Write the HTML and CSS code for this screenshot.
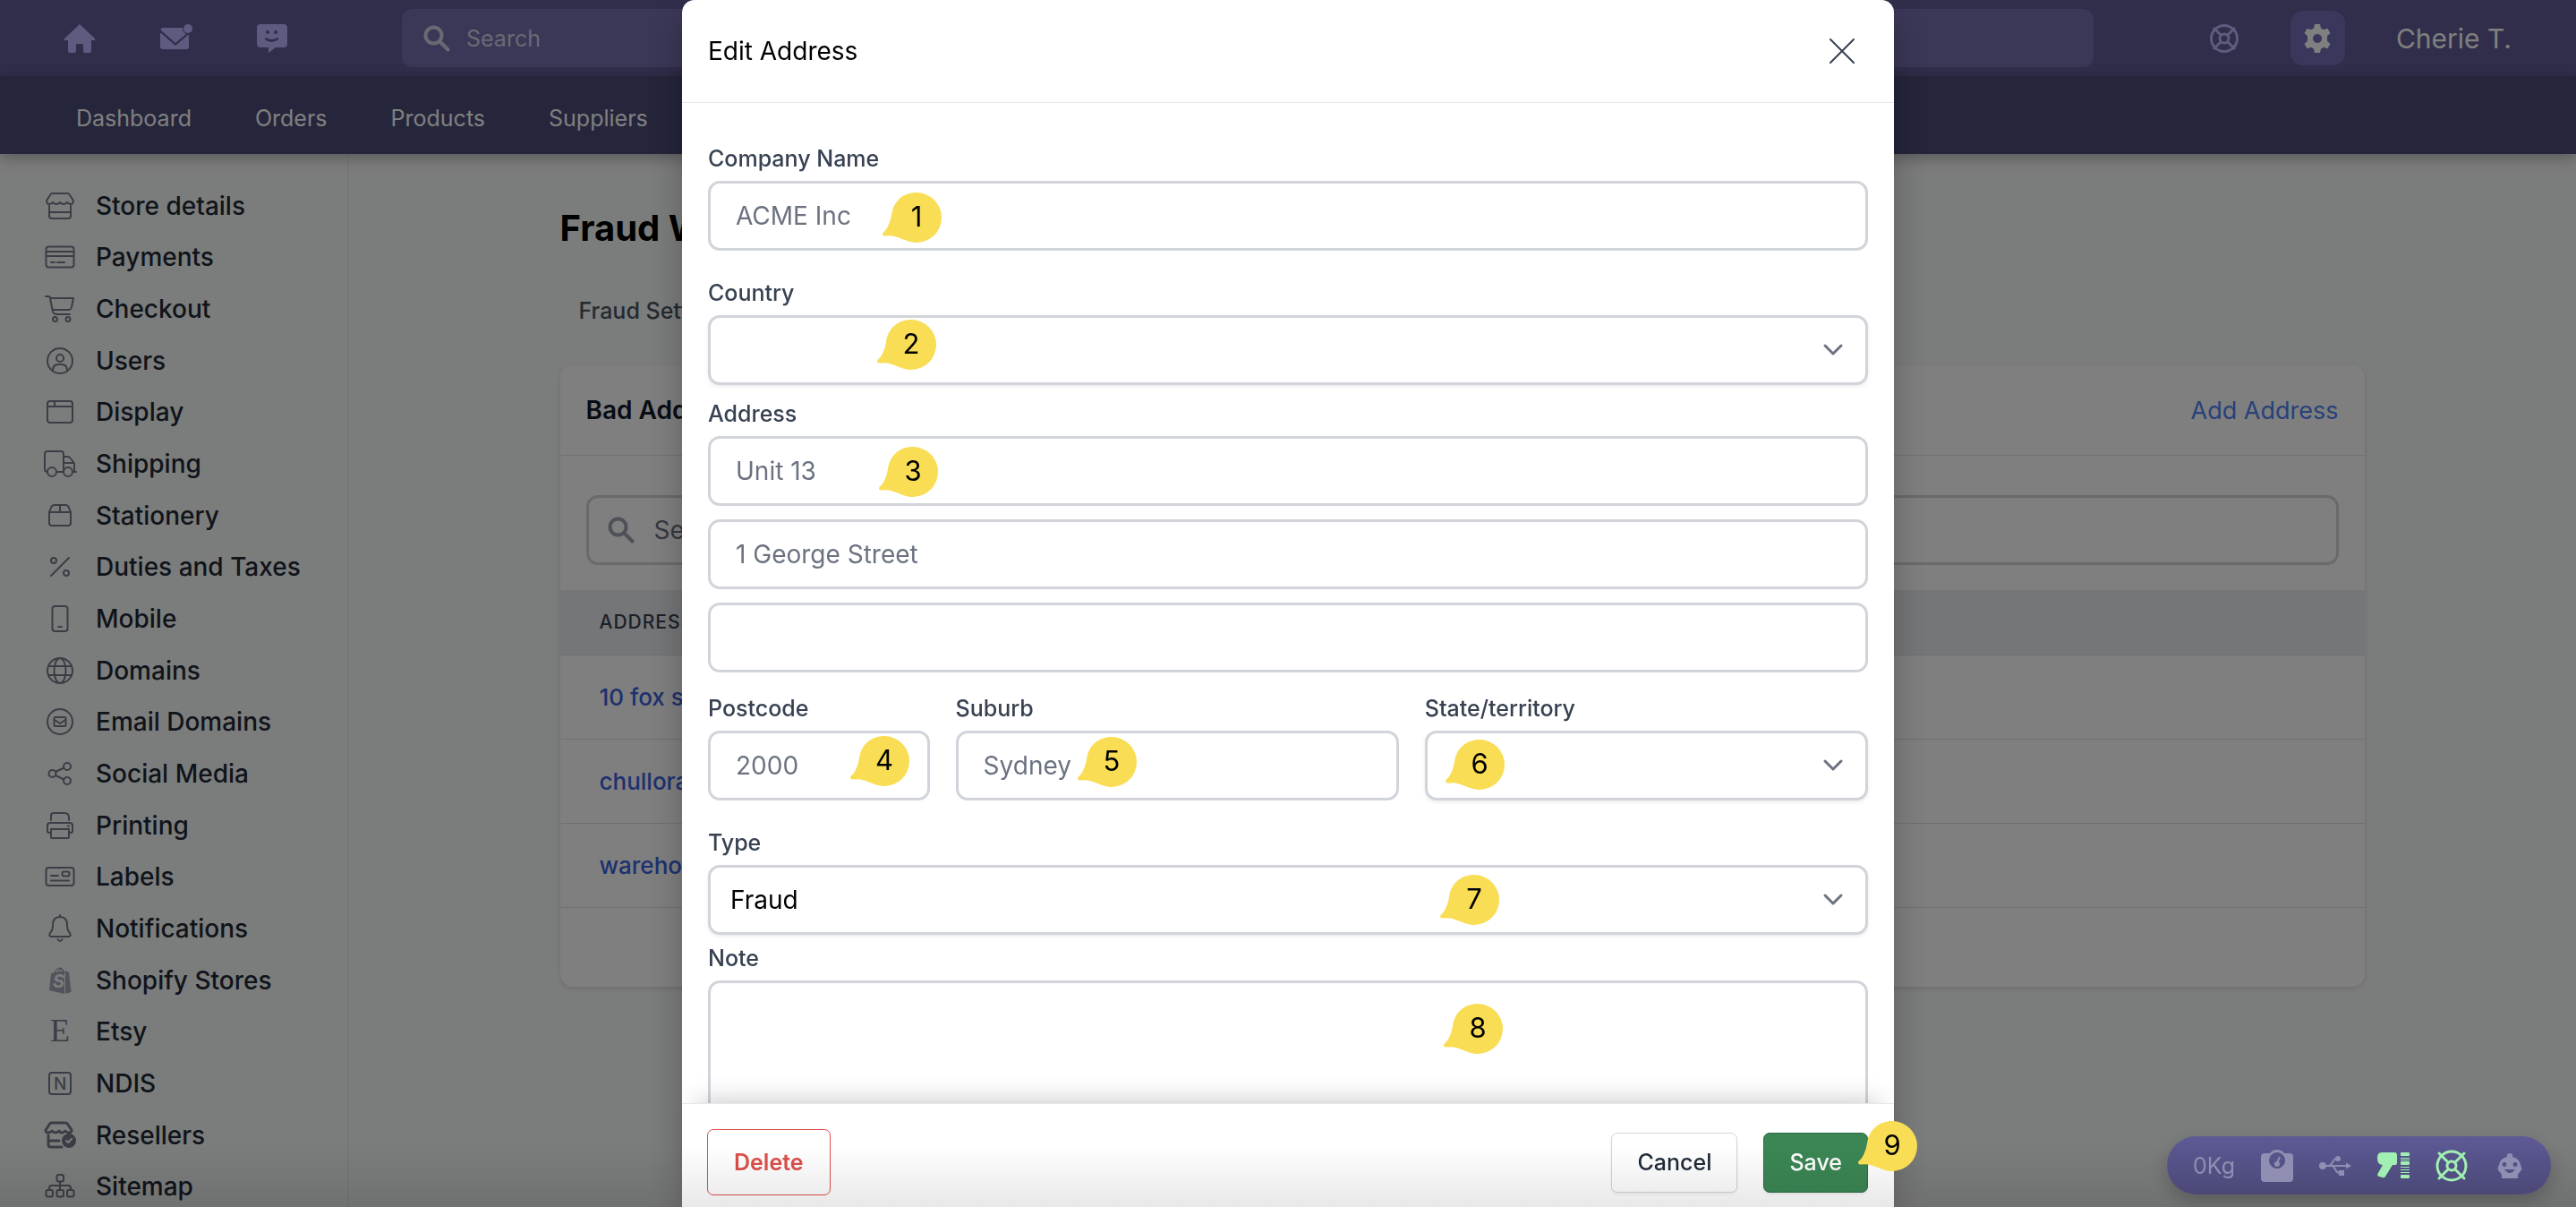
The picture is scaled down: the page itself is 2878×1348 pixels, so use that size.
FILE: index.html
```html
<!DOCTYPE html>
<html lang="en">
<head>
    <meta charset="UTF-8">
    <meta name="viewport" content="width=device-width, initial-scale=1.0">
    <title>Fraud Warnings - Edit Address</title>
    <link rel="stylesheet" href="styles.css">
</head>
<body>
    <div class="page">
        <header class="topbar">
            <a class="top-icon" href="#" aria-label="Home">
                <svg viewBox="0 0 36 36"><path d="M18 2 1 18q-1 2 1 2h3v12q0 2 2 2h5q2 0 2-2v-7q0-1 1-1h6q1 0 1 1v7q0 2 2 2h5q2 0 2-2V20h3q2 0 1-2z"/></svg>
            </a>
            <a class="top-icon" href="#" aria-label="Messages">
                <svg viewBox="0 0 36 36"><path d="M3 6h22q0 5 4 7L17 23 1 9q-1-3 2-3zM1 12l16 14 14-12h1v13q0 3-3 3H3q-3 0-3-3V12z"/><circle cx="31" cy="7" r="5"/></svg>
            </a>
            <a class="top-icon" href="#" aria-label="Chat">
                <svg viewBox="0 0 36 36"><path fill-rule="evenodd" d="M4 2h26q4 0 4 4v18q0 4-4 4h-9l-8 6v-6H4q-4 0-4-4V6q0-4 4-4zM12 9a2 2 0 1 0 .1 0zM21 9a2 2 0 1 0 .1 0zM10 17q-2 0-1 2 7 6 15 0 1-2-1-2-6 4-13 0z"/></svg>
            </a>
            <label class="top-search">
                <svg viewBox="0 0 30 30"><circle cx="11.500" cy="11.500" r="9"/><path d="m18.500 18.500 9 9"/></svg>
                <input type="search" placeholder="Search" aria-label="Search">
            </label>
            <a class="top-icon help" href="#" aria-label="Help">
                <svg viewBox="0 0 36 36"><circle cx="18" cy="18" r="14.500"/><circle cx="18" cy="18" r="5"/><path d="m6 6 8.500 8.500M30 6l-8.500 8.500M6 30l8.500-8.500M30 30l-8.500-8.500"/></svg>
            </a>
            <button class="settings" type="button" aria-label="Settings">
                <svg viewBox="0 0 32 32"><path fill-rule="evenodd" d="M13 0h6l1 4.500 3 1.700 4.300-1.500 3.200 5.200L27 13.200v5.600l3.500 3.300-3.200 5.200-4.300-1.500-3 1.700-1 4.500h-6l-1-4.500-3-1.700-4.300 1.500-3.200-5.200L5 18.800v-5.600L1.500 9.900l3.200-5.200L9 6.200l3-1.700zM16 11a5 5 0 1 0 .1 0z"/></svg>
            </button>
            <a class="user" href="#">Cherie T.</a>
        </header>
        <nav class="mainnav">
            <a href="#">Dashboard</a>
            <a href="#">Orders</a>
            <a href="#">Products</a>
            <a href="#">Suppliers</a>
        </nav>

        <div class="columns">
            <aside class="sidebar">
                <ul>
                    <li><a href="#"><svg viewBox="0 0 36 36"><path d="M9 4h18q1 0 2 2l4 6q0 4-3 4-2 0-4-2-2 2-4 2t-4-2q-2 2-4 2t-4-2q-2 2-4 2-3 0-3-4l4-6q1-2 2-2zM6 18v11q0 3 3 3h18q3 0 3-3V18M6 25h24"/></svg>Store details</a></li>
                    <li><a href="#"><svg viewBox="0 0 36 36"><rect x="2.500" y="6.500" width="31" height="23" rx="3"/><path d="M3 12h30M3 17h30M8 24h4M15 24h8"/></svg>Payments</a></li>
                    <li><a href="#"><svg viewBox="0 0 36 36"><path d="M2 4h3q2 0 2 2l3 15q1 3 4 3h15M7 6h26l-2 10q-1 3-3 3H10"/><circle cx="12.500" cy="29.500" r="2.500"/><circle cx="27" cy="29.500" r="2.500"/></svg>Checkout</a></li>
                    <li><a href="#"><svg viewBox="0 0 36 36"><circle cx="18" cy="18" r="14"/><circle cx="18" cy="15" r="4"/><path d="M10 29q0-7 6-7h4q6 0 6 7"/></svg>Users</a></li>
                    <li><a href="#"><svg viewBox="0 0 36 36"><rect x="4" y="6" width="28" height="24" rx="3"/><path d="M4 12h28M12 6v6"/></svg>Display</a></li>
                    <li><a href="#"><svg viewBox="0 0 36 36"><path d="M4 27q-3 0-3-3V7q0-3 3-3h15q3 0 3 3v20h-8M22 10h4q2 0 3 1l4 5q1 1 1 2v9h2M22 17h11"/><circle cx="9" cy="27" r="5"/><circle cx="27" cy="27" r="5"/></svg>Shipping</a></li>
                    <li><a href="#"><svg viewBox="0 0 36 36"><path d="m6 14 2-5q1-3 4-3h12q3 0 4 3l2 5v12q0 3-3 3H9q-3 0-3-3V14h24M18 6v8"/></svg>Stationery</a></li>
                    <li><a href="#"><svg viewBox="0 0 36 36"><path d="M28 8 8 28"/><circle cx="11" cy="11" r="3"/><circle cx="25" cy="25" r="3"/></svg>Duties and Taxes</a></li>
                    <li><a href="#"><svg viewBox="0 0 36 36"><rect x="9.500" y="4" width="17" height="28" rx="3"/><path d="M16 27h4"/></svg>Mobile</a></li>
                    <li><a href="#"><svg viewBox="0 0 36 36"><circle cx="18" cy="18" r="14"/><ellipse cx="18" cy="18" rx="6.500" ry="14"/><path d="M5 13h26M5 23h26"/></svg>Domains</a></li>
                    <li><a href="#"><svg viewBox="0 0 36 36"><circle cx="18" cy="18" r="14"/><rect x="11.500" y="13" width="13" height="10" rx="1"/><path d="m12 16 6 4 6-4"/></svg>Email Domains</a></li>
                    <li><a href="#"><svg viewBox="0 0 36 36"><circle cx="9.500" cy="18" r="4"/><circle cx="26" cy="10" r="4"/><circle cx="26" cy="26" r="4"/><path d="m13 16 9.500-4.500M13 20l9.500 4.500"/></svg>Social Media</a></li>
                    <li><a href="#"><svg viewBox="0 0 36 36"><path d="M8 12V7q0-3 3-3h12q5 0 5 5v3M8 26H6q-2 0-2-2v-6q0-3 3-3h22q3 0 3 3v6q0 2-2 2h-2M8 22h20v9q0 1-1 1H9q-1 0-1-1zM27 18.500h1"/></svg>Printing</a></li>
                    <li><a href="#"><svg viewBox="0 0 36 36"><rect x="2.500" y="8" width="31" height="20" rx="3"/><rect x="20.500" y="12.500" width="8" height="5" rx="2"/><path d="M8 17h8M8 22.500h20"/></svg>Labels</a></li>
                    <li><a href="#"><svg viewBox="0 0 36 36"><path d="M18 3v2M18 5q8 0 8 9 0 6 3 9 2 3-1 4H8q-3-1-1-4 3-3 3-9 0-9 8-9zM15.500 30q2.500 4 5 0"/></svg>Notifications</a></li>
                    <li><a href="#"><svg viewBox="0 0 36 36"><path class="thin" d="M12 10q2-6 6-6 4 1 5 5M16 9q2-5 4-4"/><path class="solid" d="m8 10 15-3v26L6 29zM24 7l4 2 2.500 22-6.500 2z"/><text class="shop" x="10" y="26">S</text></svg>Shopify Stores</a></li>
                    <li><a href="#"><svg viewBox="0 0 36 36"><text class="etsy" x="7" y="29">E</text></svg>Etsy</a></li>
                    <li><a href="#"><svg viewBox="0 0 36 36"><rect x="6" y="6" width="24" height="24" rx="3"/><text class="ndis" x="11" y="25">N</text></svg>NDIS</a></li>
                    <li><a href="#"><svg class="bold" viewBox="0 0 36 36"><path d="M8 4h16q2 0 3 2l4 6q0 3-3 3-2 0-4-2-2 2-4 2t-3-2q-2 2-4 2t-4-2q-2 2-4 2-3 0-3-3l4-6q1-2 2-2zM5 18v10q0 3 3 3h12M5 24h12"/><circle class="solid dark" cx="28" cy="24" r="8"/><path class="tick" d="m25 24 2 2 4-4"/></svg>Resellers</a></li>
                    <li><a href="#"><svg viewBox="0 0 36 36"><rect x="14.500" y="5" width="7.500" height="7.500" rx="2"/><rect x="2.500" y="22" width="7.500" height="7.500" rx="2"/><rect x="14.500" y="22" width="7.500" height="7.500" rx="2"/><rect x="26" y="22" width="7.500" height="7.500" rx="2"/><path d="M18 13v9M6 22v-2q0-3 3-3h18q3 0 3 3v2"/></svg>Sitemap</a></li>
                </ul>
            </aside>

            <main class="content">
                <h1>Fraud Warnings</h1>
                <div class="tabs"><a href="#">Fraud Settings</a></div>
                <section class="card">
                    <div class="card-head">
                        <h2>Bad Addresses</h2>
                        <a href="#">Add Address</a>
                    </div>
                    <div class="card-search">
                        <label>
                            <svg viewBox="0 0 30 30"><circle cx="11.500" cy="11.500" r="9"/><path d="m18.500 18.500 9 9"/></svg>
                            <input type="search" placeholder="Search" aria-label="Search addresses">
                        </label>
                    </div>
                    <table>
                        <thead>
                            <tr><th>Address</th></tr>
                        </thead>
                        <tbody>
                            <tr><td><a href="#">10 fox street</a></td></tr>
                            <tr><td><a href="#">chullora</a></td></tr>
                            <tr><td><a href="#">warehouse</a></td></tr>
                        </tbody>
                    </table>
                    <div class="card-foot"></div>
                </section>
            </main>
        </div>
    </div>

    <div class="overlay">
        <div class="modal" role="dialog" aria-labelledby="modal-title">
            <div class="modal-head">
                <h3 id="modal-title">Edit Address</h3>
                <button class="close" type="button" aria-label="Close">
                    <svg viewBox="0 0 28 28"><path d="m1 1 26 26M27 1 1 27"/></svg>
                </button>
            </div>
            <form class="modal-body" id="address-form">
                <div class="field">
                    <label for="company">Company Name</label>
                    <input type="text" id="company" placeholder="ACME Inc">
                </div>
                <div class="field close-below">
                    <label for="country">Country</label>
                    <select id="country"><option></option></select>
                </div>
                <div class="field address">
                    <label for="address1">Address</label>
                    <input type="text" id="address1" placeholder="Unit 13">
                    <input type="text" aria-label="Address line 2" placeholder="1 George Street">
                    <input type="text" aria-label="Address line 3">
                </div>
                <div class="row">
                    <div class="field">
                        <label for="postcode">Postcode</label>
                        <input type="text" id="postcode" placeholder="2000">
                    </div>
                    <div class="field">
                        <label for="suburb">Suburb</label>
                        <input type="text" id="suburb" placeholder="Sydney">
                    </div>
                    <div class="field">
                        <label for="state">State/territory</label>
                        <select id="state"><option></option></select>
                    </div>
                </div>
                <div class="field type">
                    <label for="type">Type</label>
                    <select id="type"><option>Fraud</option></select>
                </div>
                <div class="field">
                    <label for="note">Note</label>
                    <textarea id="note"></textarea>
                </div>
            </form>
            <div class="modal-foot">
                <button class="btn delete" type="button">Delete</button>
                <button class="btn cancel" type="button">Cancel</button>
                <button class="btn save" type="submit" form="address-form">Save</button>
            </div>

            <!-- numbered help pins -->
            <svg class="pin pin-1" viewBox="0 0 66 56"><use href="#drop"/><text x="38" y="38">1</text></svg>
            <svg class="pin pin-2" viewBox="0 0 66 56"><use href="#drop"/><text x="38" y="38">2</text></svg>
            <svg class="pin pin-3" viewBox="0 0 66 56"><use href="#drop"/><text x="38" y="38">3</text></svg>
            <svg class="pin pin-4" viewBox="0 0 66 56"><use href="#drop"/><text x="38" y="38">4</text></svg>
            <svg class="pin pin-5" viewBox="0 0 66 56"><use href="#drop"/><text x="38" y="38">5</text></svg>
            <svg class="pin pin-6" viewBox="0 0 66 56"><use href="#drop"/><text x="38" y="38">6</text></svg>
            <svg class="pin pin-7" viewBox="0 0 66 56"><use href="#drop"/><text x="38" y="38">7</text></svg>
            <svg class="pin pin-8" viewBox="0 0 66 56"><use href="#drop"/><text x="38" y="38">8</text></svg>
            <svg class="pin pin-9" viewBox="0 0 66 56"><use href="#drop"/><text x="38" y="38">9</text></svg>
        </div>
    </div>

    <div class="devices">
        <span>0Kg</span>
        <svg viewBox="0 0 36 36"><path fill-rule="evenodd" d="M10 4a10 10 0 0 1 16 0h6q4 0 4 4v24q0 4-4 4H4q-4 0-4-4V8q0-4 4-4zM18 3a9 9 0 1 0 .1 0z"/><circle cx="18" cy="16" r="3"/><path class="line" d="m18 15 3-7"/></svg>
        <svg viewBox="0 0 36 36"><circle cx="4" cy="18" r="4"/><circle cx="21" cy="10" r="3"/><path d="M22 23h6v6h-6zM30 14.500l6 3.500-6 3.500z"/><path class="line" d="M4 18h27M10 18q3 0 5-4 2-4 5-4M14 18q2 0 4 4 2 4 5 4"/></svg>
        <svg class="on" viewBox="0 0 36 36"><path d="M5 3h14q3 0 3 3v9q0 2-2 2h-3L9 30q-1 2-3 1l-4-1q-3-1-1-4l5-9Q0 17 0 9 0 3 5 3zM27 3h8q1 0 1 1v2q0 1-1 1h-8q-1 0-1-1V4q0-1 1-1zM27 13h8q1 0 1 1v2q0 1-1 1h-8q-1 0-1-1v-2q0-1 1-1zM27 28h8q1 0 1 1v2q0 1-1 1h-8q-1 0-1-1v-2q0-1 1-1zM26 9h10v1H26zM26 11h10v1H26zM26 19h10v1H26zM26 22h10v1H26zM26 25h10v1H26z"/></svg>
        <svg class="on ring" viewBox="0 0 36 36"><circle cx="18" cy="18" r="16"/><circle cx="18" cy="18" r="5"/><path d="m4 4 10.500 10.500M32 4 21.500 14.500M4 32l10.500-10.500M32 32 21.500 21.500"/></svg>
        <svg viewBox="0 0 36 36"><path fill-rule="evenodd" d="M15 8q-1-4 3-4t3 4q8 2 9 9 3 5-1 8l-2 3v4H9v-4l-2-3q-4-3-1-8 1-7 9-9zM12 14a2.500 2.500 0 1 0 .1 0zM24 14a2.500 2.500 0 1 0 .1 0zM12 22q6 8 12 0z"/></svg>
    </div>

    <svg class="defs" width="0" height="0" aria-hidden="true">
        <symbol id="drop" viewBox="0 0 66 56">
            <path d="M38 0a28 28 0 0 1 0 56C28 56 20 50 11 48.500Q7 48 3 48.500C0 49-1 46 1.500 44 7 39 9 30 10 25 12 9 24 0 38 0z"/>
        </symbol>
    </svg>
</body>
</html>
```
FILE: styles.css
```css
* {
    margin: 0;
    padding: 0;
    box-sizing: border-box;
}

body {
    background-color: #f7faf8;
    color: #1f2937;
    font-family: Inter, "Liberation Sans", sans-serif;
    font-size: 28px;
    height: 100vh;
    overflow: hidden;
}

a {
    color: inherit;
    text-decoration: none;
}

button, input, select, textarea {
    font-family: inherit;
    font-size: 28px;
}

.page {
    height: 100vh;
    overflow: hidden;
    display: flex;
    flex-direction: column;
}

/* top bars */
.topbar {
    flex: none;
    height: 85px;
    padding: 0 72px 0 71px;
    display: flex;
    align-items: center;
    background-color: #605c96;
    color: #ffffff;
}

.top-icon {
    width: 36px;
    height: 36px;
    margin-right: 72px;
}

.top-icon svg {
    display: block;
    fill: #bab6ff;
}

.top-search {
    flex: 1;
    height: 65px;
    margin: 0 128px 0 54px;
    padding: 0 24px;
    display: flex;
    align-items: center;
    gap: 18px;
    border-radius: 12px;
    background-color: #7470ae;
}

.top-search svg, .card-search svg {
    width: 30px;
    height: 30px;
    fill: none;
    stroke: #d4d2e6;
    stroke-width: 4;
    stroke-linecap: round;
}

.top-search input, .card-search input {
    flex: 1;
    border: none;
    outline: none;
    background: none;
    font-size: 25px;
}

.top-search input::placeholder {
    color: #d4d2e6;
}

.top-icon.help {
    margin-right: 56px;
}

.help svg {
    fill: none;
    stroke: #bab6ff;
    stroke-width: 3;
}

.settings {
    width: 61px;
    height: 61px;
    margin-right: 57px;
    display: grid;
    place-items: center;
    border: none;
    border-radius: 14px;
    background-color: #726eb8;
}

.settings svg {
    width: 32px;
    height: 32px;
    fill: #ffffff;
}

.user {
    font-size: 30px;
}

.mainnav {
    flex: none;
    height: 87px;
    padding: 6px 85px 0;
    display: flex;
    align-items: center;
    gap: 71px;
    background-color: #4a4a76;
    color: #ffffff;
    font-size: 25px;
    box-shadow: 0 4px 16px rgba(0, 0, 0, 0.3);
    z-index: 1;
}

/* sidebar */
.columns {
    flex: 1;
    display: flex;
    min-height: 0;
}

.sidebar {
    flex: none;
    width: 389px;
    padding: 29px 0 0 49px;
    border-right: 1px solid #e2e5e3;
}

.sidebar ul {
    height: 1153px;
    display: grid;
    grid-template-rows: repeat(20, 1fr);
    list-style: none;
    font-weight: 500;
}

.sidebar a {
    height: 100%;
    display: flex;
    align-items: center;
    gap: 22px;
}

.sidebar svg {
    width: 36px;
    height: 36px;
    fill: none;
    stroke: #777b8c;
    stroke-width: 2;
    stroke-linecap: round;
    stroke-linejoin: round;
    overflow: visible;
}

.sidebar svg.bold {
    stroke-width: 3;
}

.sidebar .thin {
    stroke-width: 1;
}

.sidebar .solid {
    fill: #a5a7b8;
    stroke: none;
}

.sidebar .dark {
    fill: #777b8c;
}

.sidebar .tick {
    stroke: #f7faf8;
    stroke-width: 2;
}

.sidebar text {
    stroke: none;
    fill: #777b8c;
}

.etsy {
    font-family: "Liberation Serif", serif;
    font-size: 36px;
    font-weight: 400;
}

.ndis {
    font-size: 19px;
}

.sidebar .shop {
    font-size: 20px;
    font-style: italic;
    font-weight: 700;
    fill: #f7faf8;
}

/* page content */
.content {
    flex: 1;
    max-width: 2016px;
    margin: 0 auto;
    padding-top: 53px;
}

h1 {
    color: #000000;
    font-size: 40px;
    line-height: 60px;
}

.tabs {
    padding: 44px 21px 43px;
    color: #4b5563;
    font-size: 25px;
    font-weight: 500;
    line-height: 36px;
}

.card {
    background-color: #ffffff;
    border-radius: 14px;
    box-shadow: 0 2px 6px rgba(0, 0, 0, 0.12);
}

.card-head {
    height: 101px;
    padding: 0 29px;
    display: flex;
    align-items: center;
    justify-content: space-between;
    border-bottom: 1px solid #e0e2e6;
}

.card-head h2 {
    color: #111827;
    font-size: 28px;
    font-weight: 600;
}

.card-head a {
    color: #4f83f5;
    font-size: 27px;
}

.card-search {
    padding: 44px 29px 28px;
}

.card-search label {
    height: 78px;
    padding: 0 21px;
    display: flex;
    align-items: center;
    gap: 22px;
    border: 3px solid #d1d5db;
    border-radius: 13px;
}

.card-search svg {
    stroke: #9ca3af;
}

.card-search input {
    font-size: 28px;
}

table {
    width: 100%;
    border-collapse: collapse;
    text-align: left;
}

th {
    height: 72px;
    padding-left: 44px;
    background-color: #eaecf0;
    color: #374151;
    font-size: 21px;
    font-weight: 500;
    letter-spacing: 1px;
    text-transform: uppercase;
}

td {
    height: 94px;
    padding-left: 44px;
    border-top: 1px solid #dfe1e5;
    border-bottom: 1px solid #dfe1e5;
    color: #3a62dc;
    font-size: 26px;
    font-weight: 500;
}

.card-foot {
    height: 88px;
}

/* edit dialog */
.overlay {
    position: fixed;
    inset: 0;
    z-index: 2;
    display: flex;
    justify-content: center;
    background-color: rgba(0, 0, 0, 0.5);
}

/* soft shade along the bottom of the window */
.overlay::after {
    content: "";
    position: absolute;
    inset: auto 0 0;
    height: 70px;
    background: linear-gradient(rgba(0, 0, 0, 0), rgba(0, 0, 0, 0.09));
    pointer-events: none;
}

.modal {
    position: relative;
    width: 100%;
    max-width: 1354px;
    height: 100%;
    display: flex;
    flex-direction: column;
    border-radius: 14px 14px 0 0;
    background-color: #ffffff;
    box-shadow: 0 20px 40px rgba(0, 0, 0, 0.25);
}

.modal-head {
    flex: none;
    height: 115px;
    padding: 0 44px 0 29px;
    display: flex;
    align-items: center;
    justify-content: space-between;
    border-bottom: 1px solid #e5e7eb;
}

.modal-head h3 {
    color: #000000;
    font-size: 28px;
    font-weight: 400;
}

.close {
    width: 28px;
    height: 28px;
    border: none;
    background: none;
}

.close svg {
    display: block;
    fill: none;
    stroke: #374151;
    stroke-width: 2;
    stroke-linecap: round;
}

.modal-body {
    flex: 1;
    min-height: 0;
    padding: 44px 29px 0;
    overflow: hidden;
}

.field {
    display: flex;
    flex-direction: column;
    margin-bottom: 29px;
}

.field label {
    margin-bottom: 7px;
    color: #374151;
    font-size: 25px;
    font-weight: 500;
    line-height: 36px;
}

.field input, .field select, .field textarea {
    width: 100%;
    height: 78px;
    padding: 0 28px;
    border: 3px solid #d1d5db;
    border-radius: 13px;
    outline: none;
    background-color: #ffffff;
    color: #000000;
}

.field input::placeholder, .card-search input::placeholder {
    color: #6b7280;
}

.field select {
    appearance: none;
    padding: 0 22px;
    background-image: url("data:image/svg+xml,%3Csvg xmlns='http://www.w3.org/2000/svg' viewBox='0 0 24 16' fill='none' stroke='%236b7280' stroke-width='3' stroke-linecap='round' stroke-linejoin='round'%3E%3Cpath d='m3 3 9 9 9-9'/%3E%3C/svg%3E");
    background-repeat: no-repeat;
    background-position: right 24px center;
    background-size: 24px 16px;
    box-shadow: 0 2px 4px rgba(0, 0, 0, 0.08);
}

.field textarea {
    height: 240px;
    padding: 20px 28px;
    resize: none;
}

.close-below {
    margin-bottom: 14px;
}

.address {
    margin-bottom: 22px;
}

.address input + input {
    margin-top: 15px;
}

.type {
    margin-bottom: 8px;
}

.row {
    display: grid;
    grid-template-columns: 1fr 2fr 2fr;
    gap: 29px;
}

.modal-foot {
    flex: none;
    height: 116px;
    padding: 15px 29px 0 28px;
    display: flex;
    align-items: center;
    gap: 29px;
    border-top: 1px solid #e5e7eb;
    background-color: #ffffff;
    box-shadow: 0 -18px 30px -18px rgba(0, 0, 0, 0.25);
}

.btn {
    height: 67px;
    padding: 0 28px;
    border: 1px solid #d1d5db;
    border-radius: 7px;
    background-color: #ffffff;
    color: #1f2937;
    font-size: 25px;
    font-weight: 500;
    box-shadow: 0 2px 3px rgba(0, 0, 0, 0.06);
}

.delete {
    height: 74px;
    margin-right: auto;
    padding: 0 29px;
    border-color: #dc4f49;
    color: #dc4f49;
    font-weight: 600;
    box-shadow: none;
}

.save {
    border-color: #2c6a42;
    background-color: #3b8654;
    color: #ffffff;
}

/* pins, placed over the dialog */
.pin {
    position: absolute;
    width: 66px;
    height: 56px;
    z-index: 1;
    fill: #f9dd55;
}

.pin text {
    fill: #000000;
    font-size: 31px;
    text-anchor: middle;
}

.pin-1 { left: 224px; top: 215px; }
.pin-2 { left: 218px; top: 357px; }
.pin-3 { left: 220px; top: 499px; }
.pin-4 { left: 188px; top: 822px; }
.pin-5 { left: 442px; top: 823px; }
.pin-6 { left: 853px; top: 826px; }
.pin-7 { left: 847px; top: 977px; }
.pin-8 { left: 851px; top: 1121px; }
.pin-9 { left: 1314px; top: 1252px; }

.defs {
    position: absolute;
}

/* device status */
.devices {
    position: fixed;
    right: 28px;
    bottom: 14px;
    z-index: 3;
    height: 65px;
    padding: 0 28px 0 29px;
    display: flex;
    align-items: center;
    gap: 29px;
    border-radius: 33px;
    background: linear-gradient(#5d5a96, #4b4877);
    box-shadow: 0 8px 20px rgba(0, 0, 0, 0.2);
    color: #918eb3;
    font-size: 25px;
}

.devices svg {
    width: 36px;
    height: 36px;
    fill: #918eb3;
}

.devices .line {
    fill: none;
    stroke: #918eb3;
    stroke-width: 2;
}

.devices .on {
    fill: #a1efb2;
}

.devices .ring {
    fill: none;
    stroke: #a1efb2;
    stroke-width: 3;
    stroke-linecap: round;
}
```
